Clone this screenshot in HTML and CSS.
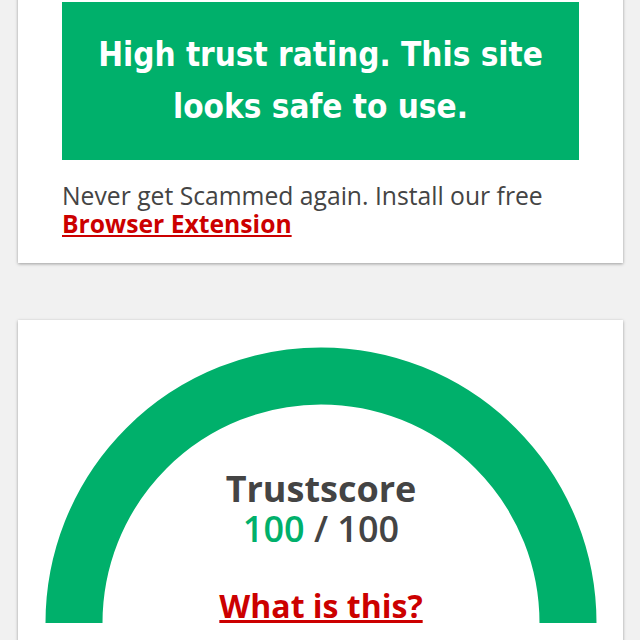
FILE: index.html
```html
<!DOCTYPE html>
<html lang="en">

<head>
    <meta charset="UTF-8">
    <meta name="viewport" content="width=device-width, initial-scale=1.0">
    <title>Trust rating</title>
    <link rel="stylesheet" href="styles.css">
</head>

<body>
    <div class="page">
        <div class="card rating">
            <div class="verdict">
                <p>High trust rating. This site looks safe to use.</p>
            </div>
            <p class="promo">Never get Scammed again. Install our free
                <a href="#">Browser Extension</a></p>
        </div>

        <div class="card score">
            <div class="gauge">
                <svg class="arc" width="552" height="276" viewBox="0 0 552 276">
                    <path d="M 29 276 A 247 247 0 0 1 523 276" fill="none" stroke="#00b06b" stroke-width="57" />
                </svg>
                <div class="gauge-text">
                    <p class="label">Trustscore</p>
                    <p class="value"><span class="good">100</span> / 100</p>
                    <a class="what" href="#">What is this?</a>
                </div>
            </div>
        </div>
    </div>
</body>

</html>
```

FILE: styles.css
```css
body {
    margin: 0;
    background-color: #f1f1f1;
    font-family: "Open Sans", "DejaVu Sans", sans-serif;
    color: #444;
}

.page {
    margin-top: -40px;
    padding: 0 17px 0 18px;
    display: flex;
    flex-direction: column;
    gap: 57px;
}

.card {
    background-color: #fff;
    box-shadow: 0 1px 3px rgba(0, 0, 0, 0.35);
}

.rating {
    padding: 42px 44px 25px;
}

.verdict {
    background-color: #00b06b;
    padding: 27px 20px;
}

.verdict p {
    margin: 0;
    color: #fff;
    text-align: center;
    font-family: "Liberation Sans Narrow", "DejaVu Sans Condensed", sans-serif;
    font-weight: bold;
    font-size: 33px;
    line-height: 52px;
}

.promo {
    margin: 22px 0 0;
    font-size: 24.7px;
    line-height: 28px;
}

.promo a,
.what {
    color: #cc0000;
    font-weight: bold;
    text-decoration: underline;
}

.score {
    padding: 27px 26px 40px 27px;
}

.gauge {
    display: grid;
    justify-items: center;
}

.arc,
.gauge-text {
    grid-area: 1 / 1;
}

.arc {
    display: block;
}

.gauge-text {
    padding-top: 122px;
    text-align: center;
}

.label,
.value {
    margin: 0;
    font-weight: bold;
    font-size: 36px;
    line-height: 40px;
}

.value {
    font-weight: 600;
}

.good {
    color: #00b06b;
}

.what {
    display: inline-block;
    margin-top: 37px;
    font-size: 32px;
    line-height: 40px;
}
```
